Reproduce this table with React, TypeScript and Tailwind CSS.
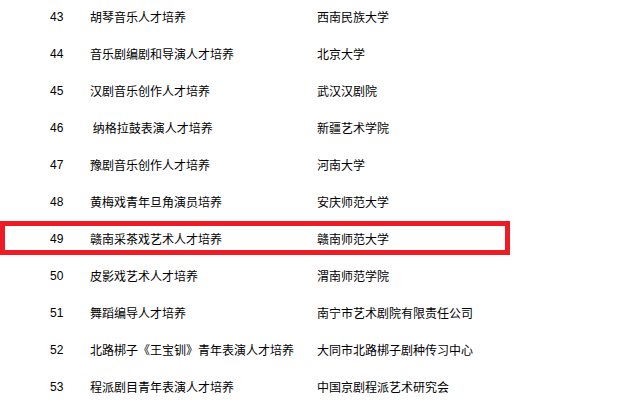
import React from "react";

const rows: [string, string, string][] = [
  ["43", "胡琴音乐人才培养", "西南民族大学"],
  ["44", "音乐剧编剧和导演人才培养", "北京大学"],
  ["45", "汉剧音乐创作人才培养", "武汉汉剧院"],
  ["46", " 纳格拉鼓表演人才培养", "新疆艺术学院"],
  ["47", "豫剧音乐创作人才培养", "河南大学"],
  ["48", "黄梅戏青年旦角演员培养", "安庆师范大学"],
  ["49", "赣南采茶戏艺术人才培养", "赣南师范大学"],
  ["50", "皮影戏艺术人才培养", "渭南师范学院"],
  ["51", "舞蹈编导人才培养", "南宁市艺术剧院有限责任公司"],
  ["52", "北路梆子《王宝钏》青年表演人才培养", "大同市北路梆子剧种传习中心"],
  ["53", "程派剧目青年表演人才培养", "中国京剧程派艺术研究会"],
];

export default function App() {
  return (
    <div className="w-[638px] h-[409px] overflow-hidden bg-white text-black">
      <div className="-mt-[2px] flex flex-col">
        {rows.map(([n, name, org]) => (
          <div key={n} className="relative h-[37px] flex items-center">
            {n === "49" && (
              <div className="absolute left-0 top-[1px] h-[34px] w-[510px] border-[5px] border-[#ed1c24]" />
            )}
            <div
              className="w-[90px] pl-[50px] text-[12px] leading-[14px]"
              style={{ fontFamily: '"Liberation Sans", Arial, sans-serif' }}
            >
              {n}
            </div>
            <div
              className="w-[227px] whitespace-pre text-[12px] leading-[14px]"
              style={{ fontFamily: '"Noto Sans CJK SC", sans-serif' }}
            >
              {name}
            </div>
            <div
              className="whitespace-pre text-[12px] leading-[14px]"
              style={{ fontFamily: '"Noto Sans CJK SC", sans-serif' }}
            >
              {org}
            </div>
          </div>
        ))}
      </div>
    </div>
  );
}
